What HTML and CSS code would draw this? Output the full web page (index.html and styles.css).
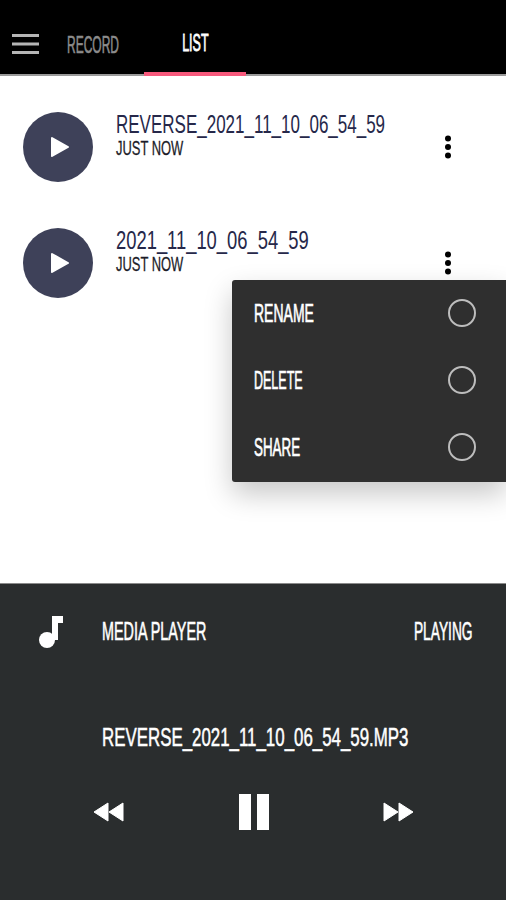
FILE: index.html
```html
<!DOCTYPE html>
<html lang="en">
<head>
<meta charset="utf-8">
<title>Recorder</title>
<link rel="stylesheet" href="styles.css">
</head>
<body>
<div class="app">
  <header class="topbar">
    <svg class="burger" width="27" height="22" viewBox="0 0 27 22"><path d="M0 2.500h27M0 11h27M0 19.500h27" stroke="#b5b5b5" stroke-width="3"/></svg>
    <div class="tab tab-record"><span class="squeeze s-record">RECORD</span></div>
    <div class="tab tab-list"><span class="squeeze s-list">LIST</span></div>
  </header>
  <main class="list">
    <div class="row">
      <div class="play"><svg width="20" height="22" viewBox="0 0 20 22"><path d="M2 2 L18 11 L2 20 Z" fill="#fff" stroke="#fff" stroke-width="2" stroke-linejoin="round"/></svg></div>
      <div class="meta">
        <div class="name"><span class="squeeze s-name-a">REVERSE_2021_11_10_06_54_59</span></div>
        <div class="when"><span class="squeeze s-when">JUST NOW</span></div>
      </div>
      <svg class="kebab" width="8" height="24" viewBox="0 0 8 24"><circle cx="4" cy="3.500" r="3"/><circle cx="4" cy="12" r="3"/><circle cx="4" cy="20.500" r="3"/></svg>
    </div>
    <div class="row">
      <div class="play"><svg width="20" height="22" viewBox="0 0 20 22"><path d="M2 2 L18 11 L2 20 Z" fill="#fff" stroke="#fff" stroke-width="2" stroke-linejoin="round"/></svg></div>
      <div class="meta">
        <div class="name"><span class="squeeze s-name-b">2021_11_10_06_54_59</span></div>
        <div class="when"><span class="squeeze s-when">JUST NOW</span></div>
      </div>
      <svg class="kebab" width="8" height="24" viewBox="0 0 8 24"><circle cx="4" cy="3.500" r="3"/><circle cx="4" cy="12" r="3"/><circle cx="4" cy="20.500" r="3"/></svg>
    </div>
    <div class="menu">
      <div class="menu-item"><span class="squeeze s-rename">RENAME</span><i class="radio"></i></div>
      <div class="menu-item"><span class="squeeze s-delete">DELETE</span><i class="radio"></i></div>
      <div class="menu-item"><span class="squeeze s-share">SHARE</span><i class="radio"></i></div>
    </div>
  </main>
  <footer class="player">
    <div class="player-head">
      <svg class="note" width="24" height="32" viewBox="0 0 24 32"><path d="M13 0h11v7h-5v17h-6z" fill="#fff"/><circle cx="8" cy="24" r="8" fill="#fff"/></svg>
      <div class="player-title"><span class="squeeze s-title">MEDIA PLAYER</span></div>
      <div class="player-state"><span class="squeeze s-state">PLAYING</span></div>
    </div>
    <div class="track"><span class="squeeze s-track">REVERSE_2021_11_10_06_54_59.MP3</span></div>
    <div class="controls">
      <svg width="32" height="22" viewBox="0 0 32 22"><path d="M15 2v18L1 11zM30 2v18L16 11z" fill="#fff" stroke="#fff" stroke-linejoin="round"/></svg>
      <svg width="32" height="36" viewBox="0 0 32 36"><path d="M1 0h12v36H1zM19 0h12v36H19z" fill="#fff"/></svg>
      <svg width="32" height="22" viewBox="0 0 32 22"><path d="M2 2v18L16 11zM17 2v18L31 11z" fill="#fff" stroke="#fff" stroke-linejoin="round"/></svg>
    </div>
  </footer>
</div>
</body>
</html>
```
FILE: styles.css
```css
* { box-sizing: border-box; }
html, body { margin: 0; padding: 0; }
body { background: #fff; font-family: "Liberation Sans", sans-serif; }
.app { width: 506px; height: 900px; display: flex; flex-direction: column; overflow: hidden; }

/* Condensed display face: narrowed from a regular sans */
.squeeze { display: inline-block; white-space: nowrap; transform-origin: left center; }
.s-record { transform: scaleX(.5); -webkit-text-stroke: .6px #8c8c8c; }
.s-list { transform: scaleX(.52); transform-origin: center; -webkit-text-stroke: .8px #fff; }
.s-name-a { transform: scaleX(.68); }
.s-name-b { transform: scaleX(.735); }
.s-when { transform: scaleX(.615); -webkit-text-stroke: .3px #1c1c28; }
.s-rename { transform: scaleX(.56); -webkit-text-stroke: .7px #fff; }
.s-delete { transform: scaleX(.5); -webkit-text-stroke: .7px #fff; }
.s-share { transform: scaleX(.535); -webkit-text-stroke: .7px #fff; }
.s-title { transform: scaleX(.575); -webkit-text-stroke: .6px #fff; }
.s-state { transform: scaleX(.55); transform-origin: right center; -webkit-text-stroke: .6px #fff; }
.s-track { transform: scaleX(.675); -webkit-text-stroke: .5px #fff; }

.topbar { height: 76px; flex: none; background: #000; border-bottom: 2px solid #9a9a9a; display: flex; align-items: stretch; padding-left: 12px; }
.burger { align-self: center; flex: none; margin-top: 13px; }
.tab { font-size: 24px; display: flex; align-items: center; margin-bottom: -2px; padding-top: 13px; }
.tab-record { width: 105px; padding-left: 28px; color: #8c8c8c; }
.tab-list { width: 102px; justify-content: center; color: #fff; border-bottom: 4px solid #f7597c; }

.list { flex: 1; position: relative; padding: 36px 0 0 23px; }
.row { display: flex; height: 70px; margin-bottom: 46px; align-items: center; }
.play { width: 70px; height: 70px; border-radius: 50%; background: #3e4159; display: flex; align-items: center; justify-content: center; padding-left: 3px; flex: none; }
.meta { margin: -25px 0 0 23px; width: 328px; flex: none; }
.name { font-size: 25px; line-height: 26px; color: #26284a; }
.when { font-size: 21px; line-height: 22px; color: #1c1c28; }
.kebab { flex: none; fill: #000; }

.menu { position: absolute; left: 232px; top: 204px; width: 274px; height: 202px; background: #2f2f2f; border-radius: 3px 0 0 3px; box-shadow: 0 12px 28px rgba(0,0,0,.22); padding: 0 30px 2px 22px; display: flex; flex-direction: column; justify-content: center; gap: 39px; }
.menu-item { height: 28px; display: flex; align-items: center; justify-content: space-between; color: #fff; font-size: 25px; }
.radio { width: 28px; height: 28px; flex: none; border-radius: 50%; border: 2.500px solid #bdbdbd; display: block; }

.player { height: 317px; flex: none; background: #2a2d2e; color: #fff; border-top: 1px solid #8a8a8a; display: flex; flex-direction: column; }
.player-head { display: flex; align-items: center; padding: 29px 33px 0 39px; height: 66px; font-size: 25px; }
.player-title { margin-left: 39px; flex: 1; }
.track { margin: 73px 0 0 102px; font-size: 25px; line-height: 28px; }
.controls { display: flex; align-items: center; justify-content: space-between; margin: 43px 92px 0 93px; }
```
